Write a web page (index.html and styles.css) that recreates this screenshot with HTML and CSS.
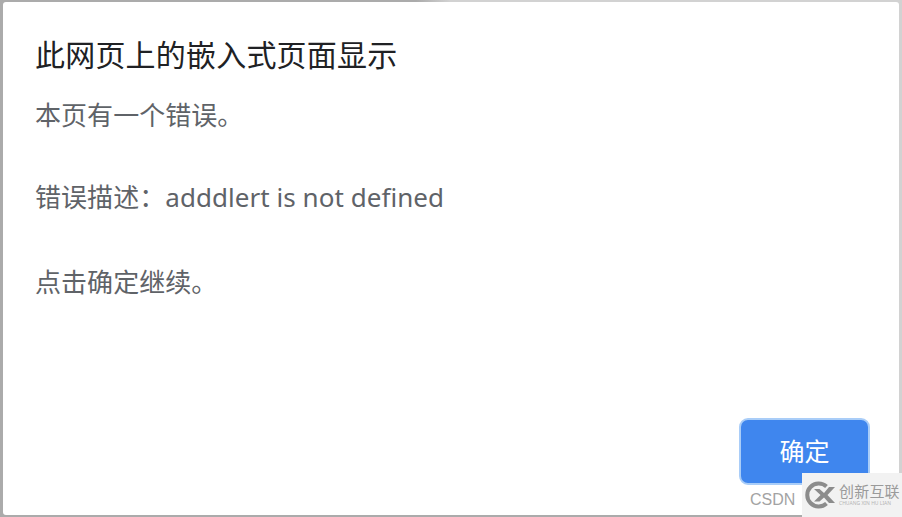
FILE: index.html
```html
<!DOCTYPE html>
<html lang="zh-CN">
<head>
    <meta charset="utf-8" />
    <meta name="viewport" content="width=device-width, initial-scale=1.0" />
    <title>此网页上的嵌入式页面显示</title>
    <link rel="stylesheet" href="styles.css">
</head>
<body>
    <div class="dialog">
        <h1 class="dialog-title">此网页上的嵌入式页面显示</h1>
        <div class="dialog-message">
            <p>本页有一个错误。</p>
            <p>错误描述：adddlert is not defined</p>
            <p>点击确定继续。</p>
        </div>
        <div class="dialog-buttons">
            <button class="ok-button">确定</button>
        </div>
    </div>

    <!-- watermarks over the screenshot -->
    <span class="csdn-mark">CSDN</span>
    <div class="brand-mark">
        <svg class="brand-logo" width="32" height="28" viewBox="0 0 32 28">
            <path d="M22.500 5.500 A11.500 11.500 0 1 0 22.500 22.500" fill="none" stroke="#8c8c8c" stroke-width="4"/>
            <path d="M10 8 L15.500 8 L20 12 L25 6 L31 6 L23.500 14 L31 22 L25 22 L20 16.500 L15.500 20.500 L10 20.500 L16.500 14 Z" fill="#8c8c8c"/>
        </svg>
        <div class="brand-text">
            <span class="brand-name">创新互联</span>
            <span class="brand-pinyin">CHUANG XIN HU LIAN</span>
        </div>
    </div>
</body>
</html>
```

FILE: styles.css
```css
html, body {
    height: 100%;
}
body {
    margin: 0;
    padding: 2px 3px 2px 3px;
    box-sizing: border-box;
    background:
        linear-gradient(#ababab, #ababab) left bottom / 100% 2px no-repeat,
        linear-gradient(to right, #ababab 416px, #d2d2d2 450px);
    font-family: "Noto Sans", "Noto Sans CJK SC", sans-serif;
    position: relative;
    overflow: hidden;
}
.dialog {
    height: 100%;
    box-sizing: border-box;
    padding: 34px 29px 30px 33px;
    background-color: #fff;
    border-radius: 3px;
    display: flex;
    flex-direction: column;
}
.dialog-title {
    margin: 0 0 0 -1px;
    font-size: 30px;
    font-weight: 400;
    line-height: 38px;
    letter-spacing: 0.2px;
    color: #202124;
}
.dialog-message {
    margin: 23px 0 0 -1px;
    font-size: 26px;
    letter-spacing: 0.05px;
    color: #5f6368;
}
.dialog-message p {
    margin: 0 0 48px;
    line-height: 36px;
}
.dialog-message p:first-child {
    margin-bottom: 46px;
}
.dialog-message p:nth-child(2) {
    margin-bottom: 49px;
}
.dialog-buttons {
    margin-top: auto;
    display: flex;
    justify-content: flex-end;
}
.ok-button {
    width: 131px;
    height: 67px;
    padding: 0 0 4px;
    border: 2px solid #a9cdf8;
    border-radius: 9px;
    background-color: #3f86ee;
    color: #fff;
    font-family: inherit;
    font-size: 25px;
}
.csdn-mark {
    position: absolute;
    left: 750px;
    top: 491px;
    font-family: "Liberation Sans", sans-serif;
    font-size: 16px;
    color: #a3a3a3;
}
.brand-mark {
    position: absolute;
    right: 0;
    bottom: 0;
    width: 100px;
    height: 44px;
    padding-left: 2px;
    box-sizing: border-box;
    background-color: #f2f2f2;
    display: flex;
    align-items: center;
    gap: 3px;
}
.brand-text {
    display: flex;
    flex-direction: column;
    gap: 2px;
}
.brand-name {
    font-size: 15px;
    line-height: 15px;
    color: #9a9a9a;
    letter-spacing: 0.2px;
}
.brand-pinyin {
    font-size: 5px;
    line-height: 5px;
    color: #b5b5b5;
}
```
